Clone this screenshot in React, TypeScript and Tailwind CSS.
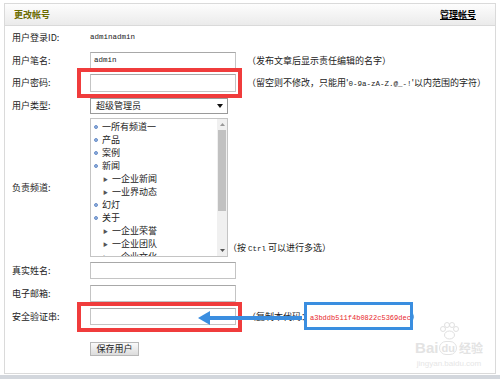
import type { ReactNode } from "react";

const cjk = "font-['Noto_Sans_CJK_SC',sans-serif]";
const mono = "font-['Liberation_Mono',monospace]";

const channels: { name: string; sub?: boolean }[] = [
  { name: "一所有频道一" },
  { name: "产品" },
  { name: "案例" },
  { name: "新闻" },
  { name: "一企业新闻", sub: true },
  { name: "一业界动态", sub: true },
  { name: "幻灯" },
  { name: "关于" },
  { name: "一企业荣誉", sub: true },
  { name: "一企业团队", sub: true },
  { name: "一企业文化", sub: true },
];

const Row = ({
  label,
  className,
  children,
}: {
  label: string;
  className: string;
  children?: ReactNode;
}) => (
  <div className={`flex items-center ${className}`}>
    <div className="w-[78px] shrink-0">{label}</div>
    {children}
  </div>
);

const TextBox = ({ value }: { value?: string }) => (
  <div className="w-[146px] h-full border border-[#c4c4c4] border-t-[#a8a8a8] bg-white flex items-center px-[3px]">
    {value && <span className={`${mono} text-[7.5px] text-[#222]`}>{value}</span>}
  </div>
);

const RedBox = () => (
  <div className="absolute -left-[13px] -top-[6px] w-[165px] h-[30px] border-[4px] border-[#f03c3c]"></div>
);

const App = () => {
  return (
    <div className={`relative w-[500px] h-[379px] overflow-hidden bg-white ${cjk} text-[9px] text-[#222]`}>
      <div className="ml-[4px] mt-[3px] w-[492px] h-[371px] border border-[#dadada]">
        <div className="h-[22px] flex items-center justify-between px-[9px] bg-gradient-to-b from-[#fdfdfd] to-[#ebebeb] border-b border-[#dadada]">
          <span className="font-bold text-[#6b6b00]">更改帐号</span>
          <span className="font-bold underline text-black mr-[10px]">管理帐号</span>
        </div>

        <div className="pl-[7px]">
          <Row label="用户登录ID:" className="mt-[2px] h-[20px]">
            <span className={`${mono} text-[7.5px]`}>adminadmin</span>
          </Row>

          <Row label="用户笔名:" className="mt-[4px] h-[18px]">
            <TextBox value="admin" />
            <span className="ml-[11px]">（发布文章后显示责任编辑的名字）</span>
          </Row>

          <Row label="用户密码:" className="mt-[4px] h-[18px]">
            <div className="relative h-full">
              <TextBox />
              <RedBox />
            </div>
            <span className="ml-[11px] whitespace-nowrap">
              （留空则不修改，只能用'<span className={`${mono} text-[7.5px]`}>0-9a-zA-Z.@_-!</span>'以内范围的字符）
            </span>
          </Row>

          <Row label="用户类型:" className="mt-[6px] h-[16px]">
            <div className="w-[138px] h-full border border-[#9a9a9a] bg-white flex items-center justify-between pl-[5px] pr-[4px]">
              <span>超级管理员</span>
              <svg width="6" height="4" viewBox="0 0 6 4">
                <polygon points="0,0 6,0 3,4" fill="#111" />
              </svg>
            </div>
          </Row>

          <div className="mt-[4px] h-[139px] flex">
            <div className="w-[78px] shrink-0 flex items-center">负责频道:</div>
            <div className="w-[138px] h-full border border-[#c4c4c4] bg-white flex overflow-hidden">
              <div className="flex-1 pt-[1px] overflow-hidden">
                {channels.map((c) => (
                  <div key={c.name} className="h-[13px] flex items-center">
                    {c.sub ? (
                      <>
                        <span className="ml-[12px] text-[5px] text-[#555]">▶</span>
                        <span className="ml-[4px]">{c.name}</span>
                      </>
                    ) : (
                      <>
                        <span className="ml-[3px] w-[4px] h-[4px] rounded-full bg-[#8fb0e0] border border-[#6b8fc8]"></span>
                        <span className="ml-[4px]">{c.name}</span>
                      </>
                    )}
                  </div>
                ))}
              </div>
              <div className="w-[10px] h-full bg-[#f0f0f0] flex flex-col items-center">
                <svg className="mt-[4px]" width="5" height="3" viewBox="0 0 5 3">
                  <polygon points="0,3 5,3 2.5,0" fill="#999" />
                </svg>
                <div className="w-[8px] h-[81px] bg-[#c1c1c1] mt-[4px]"></div>
                <div className="flex-1"></div>
                <svg className="mb-[4px]" width="5" height="3" viewBox="0 0 5 3">
                  <polygon points="0,0 5,0 2.5,3" fill="#555" />
                </svg>
              </div>
            </div>
            <div className="self-end mb-[2px] whitespace-nowrap">
              （按 <span className={`${mono} text-[7.5px]`}>Ctrl</span> 可以进行多选）
            </div>
          </div>

          <Row label="真实姓名:" className="mt-[5px] h-[17px]">
            <TextBox />
          </Row>

          <Row label="电子邮箱:" className="mt-[6px] h-[17px]">
            <TextBox />
          </Row>

          <Row label="安全验证串:" className="mt-[6px] h-[17px]">
            <div className="relative h-full">
              <TextBox />
              <RedBox />
            </div>
            <span className="ml-[11px] whitespace-nowrap">
              （复制本代码：
              <span className="relative inline-block">
                <span className={`${mono} text-[7px] text-[#e8262b]`}>a3bddb511f4b0822c5369dec</span>
                <span className="absolute -left-[6px] -right-[2px] -top-[8px] -bottom-[7px] border-[3px] border-[#3a8ee0]"></span>
              </span>
              ）
            </span>
          </Row>

          <div className="mt-[17px] ml-[78px] w-[49px] h-[14px] border border-[#b8b8b8] bg-gradient-to-b from-[#fafafa] to-[#dcdcdc] flex items-center justify-center">
            保存用户
          </div>
        </div>
      </div>

      <svg className="absolute left-[196px] top-[311px]" width="106" height="14" viewBox="0 0 106 14">
        <polygon points="2,7 14,0 14,14" fill="#3b8ee0" />
        <rect x="12" y="5" width="94" height="4" fill="#3b8ee0" />
      </svg>

      <div className="absolute left-[414px] top-[322px] w-[70px] h-[50px] flex flex-col items-center text-[#e3e3e3]">
        <svg width="20" height="18" viewBox="0 0 20 18">
          <circle cx="4" cy="7" r="2.5" fill="none" stroke="#e0e0e0" strokeWidth="1" />
          <circle cx="8" cy="3" r="2.5" fill="none" stroke="#e0e0e0" strokeWidth="1" />
          <circle cx="13" cy="3" r="2.5" fill="none" stroke="#e0e0e0" strokeWidth="1" />
          <circle cx="17" cy="7" r="2.5" fill="none" stroke="#e0e0e0" strokeWidth="1" />
          <ellipse cx="10.5" cy="13" rx="5" ry="4" fill="none" stroke="#e0e0e0" strokeWidth="1" />
        </svg>
        <div className="flex items-center font-['Liberation_Sans',sans-serif] text-[15px] font-bold leading-[16px]">
          <span>Bai</span>
          <span className="ml-[1px] rounded-full border border-[#e3e3e3] px-[1px] text-[11px] leading-[12px]">du</span>
          <span className={`${cjk} ml-[2px] text-[12px]`}>经验</span>
        </div>
        <div className="font-['Liberation_Sans',sans-serif] text-[8px] text-[#e6e6e6] mt-[2px]">jingyan.baidu.com</div>
      </div>

      <div className="absolute left-0 bottom-0 w-[500px] h-[4px] bg-[#d3d7dd]"></div>
    </div>
  );
};

export default App;
